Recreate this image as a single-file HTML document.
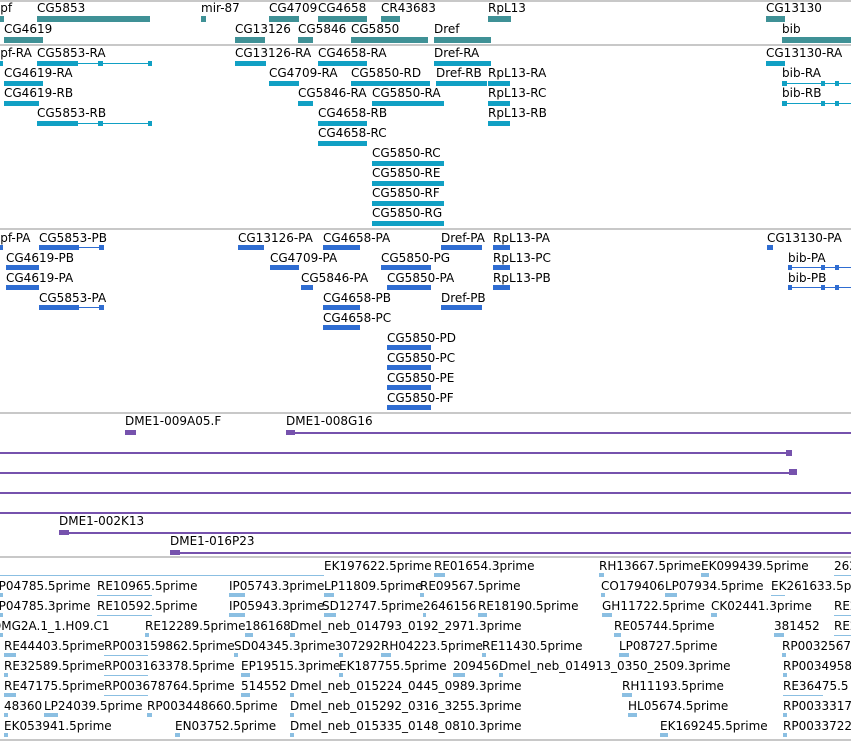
<!DOCTYPE html>
<html><head><meta charset="utf-8"><style>
body{margin:0;width:851px;height:741px;background:#fff;position:relative;overflow:hidden;font-family:"DejaVu Sans","Liberation Sans",sans-serif}
.t{position:absolute;font-size:12px;line-height:14px;color:#000;white-space:nowrap}
.s{position:absolute;left:0;width:851px;height:2px;background:#c8c8c8}
.g,.r,.p,.c,.e{position:absolute}
.g{background:#3f9196;height:6px}
.r{background:#11a0c4;height:5px}
.p{background:#2f6dd2;height:5px}
.c{background:#7652ad;height:2px}
.e{background:#8bbfe2;height:4px}
.lr{height:1px!important}
</style></head><body>
<div class="s" style="top:0"></div>
<div class="s" style="top:44px"></div>
<div class="s" style="top:228px"></div>
<div class="s" style="top:412px"></div>
<div class="s" style="top:556px"></div>
<div class="s" style="top:739px"></div>

<!-- genes -->
<div class="t" style="left:-8px;top:1px">Apf</div><div class="g" style="left:0;top:16px;width:4px"></div>
<div class="t" style="left:37px;top:1px">CG5853</div><div class="g" style="left:37px;top:16px;width:113px"></div>
<div class="t" style="left:201px;top:1px">mir-87</div><div class="g" style="left:201px;top:16px;width:5px"></div>
<div class="t" style="left:269px;top:1px">CG4709</div><div class="g" style="left:269px;top:16px;width:30px"></div>
<div class="t" style="left:318px;top:1px">CG4658</div><div class="g" style="left:318px;top:16px;width:49px"></div>
<div class="t" style="left:381px;top:1px">CR43683</div><div class="g" style="left:381px;top:16px;width:19px"></div>
<div class="t" style="left:488px;top:1px">RpL13</div><div class="g" style="left:488px;top:16px;width:23px"></div>
<div class="t" style="left:766px;top:1px">CG13130</div><div class="g" style="left:766px;top:16px;width:19px"></div>
<div class="t" style="left:4px;top:22px">CG4619</div><div class="g" style="left:4px;top:37px;width:39px"></div>
<div class="t" style="left:235px;top:22px">CG13126</div><div class="g" style="left:235px;top:37px;width:30px"></div>
<div class="t" style="left:298px;top:22px">CG5846</div><div class="g" style="left:298px;top:37px;width:15px"></div>
<div class="t" style="left:351px;top:22px">CG5850</div><div class="g" style="left:351px;top:37px;width:77px"></div>
<div class="t" style="left:434px;top:22px">Dref</div><div class="g" style="left:434px;top:37px;width:57px"></div>
<div class="t" style="left:782px;top:22px">bib</div><div class="g" style="left:782px;top:37px;width:69px"></div>

<!-- transcripts -->
<div class="t" style="left:-8px;top:46px">Apf-RA</div><div class="r" style="left:0;top:61px;width:3px"></div>
<div class="t" style="left:37px;top:46px">CG5853-RA</div><div class="r" style="left:37px;top:61px;width:41px"></div><div class="r lr" style="left:37px;top:63px;width:115px"></div><div class="r" style="left:98px;top:61px;width:5px"></div><div class="r" style="left:148px;top:61px;width:4px"></div>
<div class="t" style="left:235px;top:46px">CG13126-RA</div><div class="r" style="left:235px;top:61px;width:31px"></div>
<div class="t" style="left:318px;top:46px">CG4658-RA</div><div class="r" style="left:318px;top:61px;width:49px"></div>
<div class="t" style="left:434px;top:46px">Dref-RA</div><div class="r" style="left:434px;top:61px;width:57px"></div>
<div class="t" style="left:766px;top:46px">CG13130-RA</div><div class="r" style="left:766px;top:61px;width:19px"></div>
<div class="t" style="left:4px;top:66px">CG4619-RA</div><div class="r" style="left:4px;top:81px;width:39px"></div>
<div class="t" style="left:269px;top:66px">CG4709-RA</div><div class="r" style="left:269px;top:81px;width:30px"></div>
<div class="t" style="left:351px;top:66px">CG5850-RD</div><div class="r" style="left:351px;top:81px;width:79px"></div>
<div class="t" style="left:436px;top:66px">Dref-RB</div><div class="r" style="left:436px;top:81px;width:51px"></div>
<div class="t" style="left:488px;top:66px">RpL13-RA</div><div class="r" style="left:488px;top:81px;width:22px"></div>
<div class="t" style="left:782px;top:66px">bib-RA</div><div class="r" style="left:782px;top:81px;width:5px"></div><div class="r lr" style="left:782px;top:83px;width:69px"></div><div class="r" style="left:821px;top:81px;width:4px"></div><div class="r" style="left:835px;top:81px;width:4px"></div>
<div class="t" style="left:4px;top:86px">CG4619-RB</div><div class="r" style="left:4px;top:101px;width:35px"></div>
<div class="t" style="left:298px;top:86px">CG5846-RA</div><div class="r" style="left:298px;top:101px;width:15px"></div>
<div class="t" style="left:372px;top:86px">CG5850-RA</div><div class="r" style="left:372px;top:101px;width:72px"></div>
<div class="t" style="left:488px;top:86px">RpL13-RC</div><div class="r" style="left:488px;top:101px;width:22px"></div>
<div class="t" style="left:782px;top:86px">bib-RB</div><div class="r" style="left:782px;top:101px;width:5px"></div><div class="r lr" style="left:782px;top:103px;width:69px"></div><div class="r" style="left:821px;top:101px;width:4px"></div><div class="r" style="left:835px;top:101px;width:4px"></div>
<div class="t" style="left:37px;top:106px">CG5853-RB</div><div class="r" style="left:37px;top:121px;width:41px"></div><div class="r lr" style="left:37px;top:123px;width:115px"></div><div class="r" style="left:98px;top:121px;width:5px"></div><div class="r" style="left:148px;top:121px;width:4px"></div>
<div class="t" style="left:318px;top:106px">CG4658-RB</div><div class="r" style="left:318px;top:121px;width:49px"></div>
<div class="t" style="left:488px;top:106px">RpL13-RB</div><div class="r" style="left:488px;top:121px;width:22px"></div>
<div class="t" style="left:318px;top:126px">CG4658-RC</div><div class="r" style="left:318px;top:141px;width:49px"></div>
<div class="t" style="left:372px;top:146px">CG5850-RC</div><div class="r" style="left:372px;top:161px;width:72px"></div>
<div class="t" style="left:372px;top:166px">CG5850-RE</div><div class="r" style="left:372px;top:181px;width:72px"></div>
<div class="t" style="left:372px;top:186px">CG5850-RF</div><div class="r" style="left:372px;top:201px;width:72px"></div>
<div class="t" style="left:372px;top:206px">CG5850-RG</div><div class="r" style="left:372px;top:221px;width:72px"></div>

<!-- proteins -->
<div class="t" style="left:-8px;top:231px">Apf-PA</div><div class="p" style="left:0;top:245px;width:3px"></div>
<div class="t" style="left:39px;top:231px">CG5853-PB</div><div class="p" style="left:39px;top:245px;width:40px"></div><div class="p lr" style="left:39px;top:247px;width:65px"></div><div class="p" style="left:99px;top:245px;width:5px"></div>
<div class="t" style="left:238px;top:231px">CG13126-PA</div><div class="p" style="left:238px;top:245px;width:26px"></div>
<div class="t" style="left:323px;top:231px">CG4658-PA</div><div class="p" style="left:323px;top:245px;width:37px"></div>
<div class="t" style="left:441px;top:231px">Dref-PA</div><div class="p" style="left:441px;top:245px;width:41px"></div>
<div class="t" style="left:493px;top:231px">RpL13-PA</div><div class="p" style="left:493px;top:245px;width:17px"></div>
<div class="t" style="left:767px;top:231px">CG13130-PA</div><div class="p" style="left:767px;top:245px;width:6px"></div>
<div class="t" style="left:6px;top:251px">CG4619-PB</div><div class="p" style="left:6px;top:265px;width:33px"></div>
<div class="t" style="left:270px;top:251px">CG4709-PA</div><div class="p" style="left:270px;top:265px;width:29px"></div>
<div class="t" style="left:381px;top:251px">CG5850-PG</div><div class="p" style="left:381px;top:265px;width:50px"></div>
<div class="t" style="left:493px;top:251px">RpL13-PC</div><div class="p" style="left:493px;top:265px;width:17px"></div>
<div class="t" style="left:788px;top:251px">bib-PA</div><div class="p" style="left:788px;top:265px;width:4px"></div><div class="p lr" style="left:788px;top:267px;width:63px"></div><div class="p" style="left:821px;top:265px;width:4px"></div><div class="p" style="left:835px;top:265px;width:4px"></div>
<div class="t" style="left:6px;top:271px">CG4619-PA</div><div class="p" style="left:6px;top:285px;width:33px"></div>
<div class="t" style="left:301px;top:271px">CG5846-PA</div><div class="p" style="left:301px;top:285px;width:12px"></div>
<div class="t" style="left:387px;top:271px">CG5850-PA</div><div class="p" style="left:387px;top:285px;width:44px"></div>
<div class="t" style="left:493px;top:271px">RpL13-PB</div><div class="p" style="left:493px;top:285px;width:17px"></div>
<div class="t" style="left:788px;top:271px">bib-PB</div><div class="p" style="left:788px;top:285px;width:4px"></div><div class="p lr" style="left:788px;top:287px;width:63px"></div><div class="p" style="left:821px;top:285px;width:4px"></div><div class="p" style="left:835px;top:285px;width:4px"></div>
<div class="t" style="left:39px;top:291px">CG5853-PA</div><div class="p" style="left:39px;top:305px;width:40px"></div><div class="p lr" style="left:39px;top:307px;width:65px"></div><div class="p" style="left:99px;top:305px;width:5px"></div>
<div class="t" style="left:323px;top:291px">CG4658-PB</div><div class="p" style="left:323px;top:305px;width:37px"></div>
<div class="t" style="left:441px;top:291px">Dref-PB</div><div class="p" style="left:441px;top:305px;width:41px"></div>
<div class="t" style="left:323px;top:311px">CG4658-PC</div><div class="p" style="left:323px;top:325px;width:37px"></div>
<div class="t" style="left:387px;top:331px">CG5850-PD</div><div class="p" style="left:387px;top:345px;width:44px"></div>
<div class="t" style="left:387px;top:351px">CG5850-PC</div><div class="p" style="left:387px;top:365px;width:44px"></div>
<div class="t" style="left:387px;top:371px">CG5850-PE</div><div class="p" style="left:387px;top:385px;width:44px"></div>
<div class="t" style="left:387px;top:391px">CG5850-PF</div><div class="p" style="left:387px;top:405px;width:44px"></div>

<!-- clones -->
<div class="t" style="left:125px;top:414px">DME1-009A05.F</div><div class="c" style="left:125px;top:430px;width:11px;height:5px"></div>
<div class="t" style="left:286px;top:414px">DME1-008G16</div><div class="c" style="left:286px;top:430px;width:9px;height:5px"></div><div class="c" style="left:286px;top:432px;width:565px"></div>
<div class="c" style="left:0;top:452px;width:792px"></div><div class="c" style="left:786px;top:450px;width:6px;height:6px"></div>
<div class="c" style="left:0;top:472px;width:797px"></div><div class="c" style="left:789px;top:469px;width:8px;height:6px"></div>
<div class="c" style="left:0;top:492px;width:851px"></div>
<div class="c" style="left:0;top:512px;width:851px"></div>
<div class="t" style="left:59px;top:514px">DME1-002K13</div><div class="c" style="left:59px;top:530px;width:10px;height:5px"></div><div class="c" style="left:59px;top:532px;width:792px"></div>
<div class="t" style="left:170px;top:534px">DME1-016P23</div><div class="c" style="left:170px;top:550px;width:10px;height:5px"></div><div class="c" style="left:170px;top:552px;width:681px"></div>

<!-- ESTs -->
<div class="e lr" style="left:0;top:575px;width:324px"></div>
<div class="t" style="left:324px;top:559px">EK197622.5prime</div>
<div class="t" style="left:434px;top:559px">RE01654.3prime</div><div class="e" style="left:434px;top:573px;width:11px"></div>
<div class="t" style="left:599px;top:559px">RH13667.5prime</div><div class="e" style="left:599px;top:573px;width:5px"></div>
<div class="t" style="left:701px;top:559px">EK099439.5prime</div><div class="e" style="left:701px;top:573px;width:8px"></div>
<div class="t" style="left:834px;top:559px">262</div><div class="e lr" style="left:834px;top:575px;width:17px"></div>

<div class="t" style="left:-8px;top:579px">LP04785.5prime</div><div class="e" style="left:0;top:593px;width:3px"></div>
<div class="t" style="left:97px;top:579px">RE10965.5prime</div><div class="e lr" style="left:97px;top:595px;width:55px"></div>
<div class="t" style="left:229px;top:579px">IP05743.3prime</div><div class="e" style="left:229px;top:593px;width:16px"></div>
<div class="t" style="left:324px;top:579px">LP11809.5prime</div><div class="e" style="left:324px;top:593px;width:10px"></div>
<div class="t" style="left:420px;top:579px">RE09567.5prime</div><div class="e" style="left:420px;top:593px;width:4px"></div>
<div class="t" style="left:601px;top:579px">CO179406</div><div class="e" style="left:601px;top:593px;width:4px"></div>
<div class="t" style="left:665px;top:579px">LP07934.5prime</div><div class="e" style="left:665px;top:593px;width:12px"></div>
<div class="t" style="left:771px;top:579px">EK261633.5prime</div><div class="e lr" style="left:771px;top:595px;width:14px"></div>

<div class="t" style="left:-8px;top:599px">LP04785.3prime</div><div class="e" style="left:0;top:613px;width:3px"></div>
<div class="t" style="left:97px;top:599px">RE10592.5prime</div><div class="e lr" style="left:97px;top:615px;width:55px"></div>
<div class="t" style="left:229px;top:599px">IP05943.3prime</div><div class="e" style="left:229px;top:613px;width:16px"></div>
<div class="t" style="left:322px;top:599px">SD12747.5prime</div><div class="e" style="left:324px;top:613px;width:12px"></div>
<div class="t" style="left:423px;top:599px">2646156</div><div class="e" style="left:423px;top:613px;width:3px"></div>
<div class="t" style="left:478px;top:599px">RE18190.5prime</div><div class="e" style="left:478px;top:613px;width:9px"></div>
<div class="t" style="left:602px;top:599px">GH11722.5prime</div><div class="e" style="left:602px;top:613px;width:10px"></div>
<div class="t" style="left:711px;top:599px">CK02441.3prime</div><div class="e" style="left:711px;top:613px;width:6px"></div>
<div class="t" style="left:834px;top:599px">RE2</div><div class="e lr" style="left:834px;top:615px;width:17px"></div>

<div class="t" style="left:-8px;top:619px">DMG2A.1_1.H09.C1</div><div class="e" style="left:0;top:633px;width:3px"></div>
<div class="t" style="left:145px;top:619px">RE12289.5prime</div><div class="e" style="left:145px;top:633px;width:4px"></div>
<div class="t" style="left:245px;top:619px">186168</div><div class="e" style="left:245px;top:633px;width:8px"></div>
<div class="t" style="left:290px;top:619px">Dmel_neb_014793_0192_2971.3prime</div><div class="e" style="left:290px;top:633px;width:5px"></div>
<div class="t" style="left:614px;top:619px">RE05744.5prime</div><div class="e" style="left:614px;top:633px;width:7px"></div>
<div class="t" style="left:774px;top:619px">381452</div><div class="e" style="left:774px;top:633px;width:10px"></div>
<div class="t" style="left:834px;top:619px">RE2</div><div class="e lr" style="left:834px;top:635px;width:17px"></div>

<div class="t" style="left:4px;top:639px">RE44403.5prime</div><div class="e" style="left:4px;top:653px;width:12px"></div>
<div class="t" style="left:104px;top:639px">RP003159862.5prime</div><div class="e lr" style="left:104px;top:655px;width:44px"></div>
<div class="t" style="left:234px;top:639px">SD04345.3prime</div><div class="e" style="left:234px;top:653px;width:4px"></div>
<div class="t" style="left:335px;top:639px">307292</div><div class="e" style="left:339px;top:653px;width:4px"></div>
<div class="t" style="left:381px;top:639px">RH04223.5prime</div><div class="e" style="left:381px;top:653px;width:10px"></div>
<div class="t" style="left:482px;top:639px">RE11430.5prime</div><div class="e" style="left:482px;top:653px;width:4px"></div>
<div class="t" style="left:619px;top:639px">LP08727.5prime</div><div class="e" style="left:619px;top:653px;width:10px"></div>
<div class="t" style="left:782px;top:639px">RP0032567</div><div class="e" style="left:782px;top:653px;width:4px"></div>

<div class="t" style="left:4px;top:659px">RE32589.5prime</div><div class="e" style="left:4px;top:673px;width:4px"></div>
<div class="t" style="left:104px;top:659px">RP003163378.5prime</div><div class="e lr" style="left:104px;top:675px;width:44px"></div>
<div class="t" style="left:241px;top:659px">EP19515.3prime</div><div class="e" style="left:241px;top:673px;width:9px"></div>
<div class="t" style="left:339px;top:659px">EK187755.5prime</div><div class="e" style="left:339px;top:673px;width:4px"></div>
<div class="t" style="left:453px;top:659px">209456</div><div class="e" style="left:453px;top:673px;width:12px"></div>
<div class="t" style="left:499px;top:659px">Dmel_neb_014913_0350_2509.3prime</div><div class="e" style="left:499px;top:673px;width:4px"></div>
<div class="t" style="left:783px;top:659px">RP0034958</div><div class="e" style="left:783px;top:673px;width:4px"></div>

<div class="t" style="left:4px;top:679px">RE47175.5prime</div><div class="e" style="left:4px;top:693px;width:12px"></div>
<div class="t" style="left:104px;top:679px">RP003678764.5prime</div><div class="e lr" style="left:104px;top:695px;width:44px"></div>
<div class="t" style="left:241px;top:679px">514552</div><div class="e" style="left:241px;top:693px;width:9px"></div>
<div class="t" style="left:290px;top:679px">Dmel_neb_015224_0445_0989.3prime</div><div class="e" style="left:290px;top:693px;width:4px"></div>
<div class="t" style="left:622px;top:679px">RH11193.5prime</div><div class="e" style="left:622px;top:693px;width:10px"></div>
<div class="t" style="left:783px;top:679px">RE36475.5</div><div class="e lr" style="left:783px;top:695px;width:40px"></div>

<div class="t" style="left:4px;top:699px">48360</div><div class="e" style="left:4px;top:713px;width:4px"></div>
<div class="t" style="left:44px;top:699px">LP24039.5prime</div><div class="e" style="left:44px;top:713px;width:14px"></div>
<div class="t" style="left:147px;top:699px">RP003448660.5prime</div><div class="e" style="left:147px;top:713px;width:5px"></div>
<div class="t" style="left:290px;top:699px">Dmel_neb_015292_0316_3255.3prime</div><div class="e" style="left:290px;top:713px;width:4px"></div>
<div class="t" style="left:628px;top:699px">HL05674.5prime</div><div class="e" style="left:628px;top:713px;width:9px"></div>
<div class="t" style="left:783px;top:699px">RP0033317</div><div class="e" style="left:783px;top:713px;width:4px"></div>

<div class="t" style="left:4px;top:719px">EK053941.5prime</div><div class="e" style="left:4px;top:733px;width:4px"></div>
<div class="t" style="left:175px;top:719px">EN03752.5prime</div><div class="e" style="left:175px;top:733px;width:5px"></div>
<div class="t" style="left:290px;top:719px">Dmel_neb_015335_0148_0810.3prime</div><div class="e" style="left:290px;top:733px;width:4px"></div>
<div class="t" style="left:660px;top:719px">EK169245.5prime</div><div class="e" style="left:660px;top:733px;width:8px"></div>
<div class="t" style="left:783px;top:719px">RP0033722</div><div class="e" style="left:783px;top:733px;width:4px"></div>
</body></html>
